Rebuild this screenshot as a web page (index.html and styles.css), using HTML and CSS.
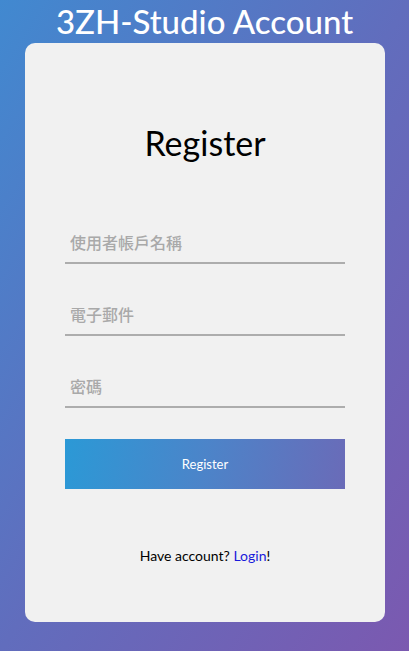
FILE: index.html
```html
<!DOCTYPE html>
<html lang="zh-Hant">
<head>
<meta charset="utf-8">
<title>3ZH-Studio Account</title>
<link rel="stylesheet" href="styles.css">
</head>
<body>
<h1 class="title">3ZH-Studio Account</h1>
<div class="card">
  <h2 class="heading">Register</h2>
  <form class="form">
    <input class="field" type="text" placeholder="使用者帳戶名稱">
    <input class="field" type="email" placeholder="電子郵件">
    <input class="field" type="password" placeholder="密碼">
    <button class="submit" type="button">Register</button>
  </form>
  <p class="footer">Have account? <a class="link" href="#">Login</a>!</p>
</div>
</body>
</html>
```
FILE: styles.css
```css
html, body {
  margin: 0;
  height: 651px;
}
body {
  background: linear-gradient(to bottom right, #4189d0 0%, #616dbd 50%, #7b59b0 100%);
  font-family: Lato, "Noto Sans", "Noto Sans CJK TC", sans-serif;
  overflow: hidden;
}
.title {
  margin: 0;
  height: 43px;
  text-align: center;
  color: #fff;
  font-size: 33px;
  line-height: 42px;
  font-weight: 500;
}
.card {
  margin: 0 24px 0 25px;
  height: 579px;
  box-sizing: border-box;
  background: #f1f1f1;
  border-radius: 10px;
  padding: 0 40px;
  display: flex;
  flex-direction: column;
}
.heading {
  margin: 80px 0 0;
  text-align: center;
  font-size: 34px;
  line-height: 40px;
  font-weight: 400;
  color: #000;
}
.form {
  margin-top: 59px;
  display: flex;
  flex-direction: column;
  gap: 30px;
}
.field {
  height: 42px;
  box-sizing: border-box;
  border: none;
  border-bottom: 2px solid #adadad;
  background: transparent;
  padding: 0 5px;
  font-family: "Noto Sans CJK TC", sans-serif;
  font-size: 16px;
  outline: none;
}
.field::placeholder {
  color: #a9a9a9;
  font-weight: 500;
}
.submit {
  margin-top: 1px;
  height: 50px;
  border: none;
  background: linear-gradient(100deg, #2b99d6 0%, #4c84c9 50%, #6a6bb8 100%);
  color: #fff;
  font-family: Lato, "Noto Sans", sans-serif;
  font-size: 13px;
}
.footer {
  margin: 57px 0 0;
  text-align: center;
  font-size: 14px;
  line-height: 20px;
  color: #000;
}
.link {
  color: #1a1adb;
  text-decoration: none;
}
```
